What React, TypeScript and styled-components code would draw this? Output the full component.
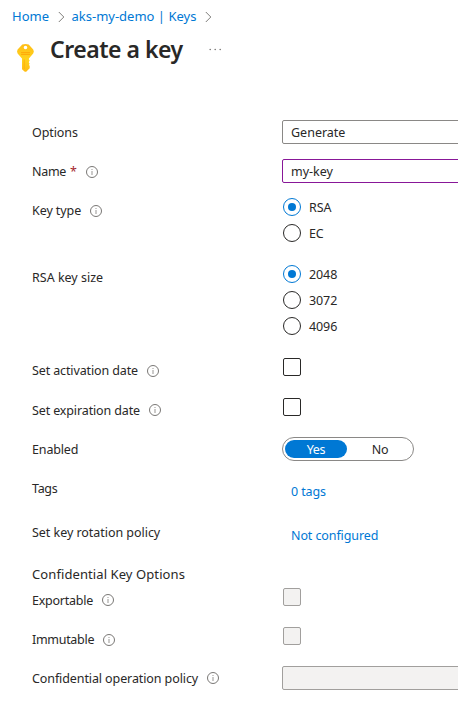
import React from 'react';
import styled, { createGlobalStyle } from 'styled-components';

const GlobalStyle = createGlobalStyle`
  * { box-sizing: border-box; }
  html, body { margin: 0; overflow: hidden; background: #fff; }
  body {
    font: 12.5px/24px 'Noto Sans', 'Open Sans', sans-serif;
    color: #292827;
  }
`;

const Page = styled.main`
  width: 100%;
  height: 709px;
  overflow: hidden;
`;

const Breadcrumb = styled.nav`
  display: flex;
  align-items: center;
  height: 32px;
  padding-left: 12px;
  font-size: 13px;
  white-space: pre;
`;

const Crumb = styled.a<{ $width: number }>`
  width: ${(p) => p.$width}px;
  color: #0078d4;
`;

const Separator = styled.svg<{ $gap: number }>`
  width: 7px;
  height: 12px;
  margin: 2px ${(p) => p.$gap}px 0 8px;
`;

const TitleBar = styled.header`
  display: flex;
  height: 88px;
  padding: 0 0 0 16px;
`;

const KeyGlyph = styled.svg`
  width: 19px;
  height: 30px;
  margin-top: 11px;
`;

const Title = styled.h1`
  width: 134px;
  margin: 1px 0 0 15px;
  font-size: 23px;
  font-weight: 600;
  line-height: 32px;
  letter-spacing: -0.48px;
  white-space: nowrap;
`;

const MoreIcon = styled.svg`
  width: 13px;
  height: 3px;
  margin: 16px 0 0 25px;
`;

const Form = styled.form`
  display: flex;
  flex-direction: column;
`;

const Row = styled.div<{ $height: number }>`
  display: grid;
  grid-template-columns: 250px 1fr;
  height: ${(p) => p.$height}px;
  padding-left: 32px;
`;

const Label = styled.label<{ $spacing?: number }>`
  display: flex;
  align-items: center;
  height: 24px;
  padding-top: 2px;
  letter-spacing: ${(p) => p.$spacing ?? -0.08}px;
  white-space: nowrap;
`;

const Required = styled.span`
  margin-left: 4px;
  color: #a4262c;
`;

const InfoSvg = styled.svg<{ $raised?: boolean }>`
  width: 12px;
  height: 12px;
  margin: 0 0 ${(p) => (p.$raised ? 2 : 0)}px 9px;
`;

const SectionHeading = styled.h2`
  height: 26px;
  margin: 0;
  padding-left: 32px;
  font-size: 13px;
  font-weight: 400;
  line-height: 24px;
  letter-spacing: 0.09px;
`;

const fieldBorder = { normal: '#8a8886', edited: '#881798', disabled: '#a19f9d' };

const Field = styled.div<{ $tone?: keyof typeof fieldBorder }>`
  height: 24px;
  margin-right: -10px;
  padding-left: 8px;
  border: 1px solid ${(p) => fieldBorder[p.$tone ?? 'normal']};
  border-radius: 2px;
  background: ${(p) => (p.$tone === 'disabled' ? '#f3f2f1' : '#fff')};
  line-height: 23px;
`;

const Options = styled.div`
  display: flex;
  flex-direction: column;
  gap: 8px;
`;

const Option = styled.div`
  display: flex;
  align-items: center;
  gap: 8px;
  height: 18px;
  padding-left: 1px;
  letter-spacing: -0.1px;
`;

const Radio = styled.span<{ $checked: boolean }>`
  display: grid;
  place-items: center;
  width: 18px;
  height: 18px;
  border: 1px solid ${(p) => (p.$checked ? '#0078d4' : '#292827')};
  border-radius: 50%;

  &::after {
    content: '';
    width: 8px;
    height: 8px;
    border-radius: 50%;
    background: ${(p) => (p.$checked ? '#0078d4' : 'transparent')};
  }
`;

const OptionText = styled.span`
  padding-top: 1px;
`;

const Checkbox = styled.span<{ $disabled?: boolean }>`
  width: 18px;
  height: 18px;
  margin-left: 1px;
  border: 1px solid ${(p) => (p.$disabled ? '#a19f9d' : '#292827')};
  border-radius: 2px;
  background: ${(p) => (p.$disabled ? '#f3f2f1' : '#fff')};
`;

const Toggle = styled.div`
  display: flex;
  width: 132px;
  height: 24px;
  padding: 2px;
  border: 1px solid #8a8886;
  border-radius: 12px;
`;

const ToggleItem = styled.span<{ $active?: boolean }>`
  flex: none;
  width: ${(p) => (p.$active ? 62 : 66)}px;
  height: 18px;
  border-radius: 9px;
  background: ${(p) => (p.$active ? '#0078d4' : 'transparent')};
  color: ${(p) => (p.$active ? '#fff' : '#292827')};
  line-height: 19px;
  text-align: center;
  letter-spacing: -0.3px;
`;

const Link = styled.a`
  height: 28px;
  padding: 4px 0 0 9px;
  color: #0078d4;
  letter-spacing: -0.1px;
`;

function Info({ raised }: { raised?: boolean }) {
  return (
    <InfoSvg $raised={raised} viewBox="0 0 12 12" fill="none">
      <circle cx="6" cy="6" r="5.5" stroke="#797775" />
      <path d="M6 5v4M6 3v1" stroke="#979593" />
    </InfoSvg>
  );
}

function Chevron({ gap }: { gap: number }) {
  return (
    <Separator $gap={gap} viewBox="0 0 7 12" fill="none">
      <path d="M.8 1l5 5-5 5" stroke="#706e6c" strokeWidth="0.9" />
    </Separator>
  );
}

function KeyIcon() {
  return (
    <KeyGlyph viewBox="0 0 19 30">
      <defs>
        <linearGradient id="gold" x1="0" y1="0" x2="0" y2="1">
          <stop offset="0" stopColor="#ffbd18" />
          <stop offset="0.55" stopColor="#ffd21c" />
          <stop offset="1" stopColor="#ffbc12" />
        </linearGradient>
      </defs>
      <path
        fill="url(#gold)"
        fillRule="evenodd"
        d="M6.3 1.6Q9.5.2 12.7 1.6L17.2 6.6Q18.5 8.5 17.2 10.4L12.9 15.4V16.5L13.7 17.5L12.9 18.7V19.7L13.7 20.7L12.9 21.8L13.7 23V25.2L10.2 28.7H8.8L6 26.2V15.4L1.6 10.4Q.5 8.5 1.6 6.6ZM9.5 2.7A1.8 1.8 0 1 0 9.5 6.3A1.8 1.8 0 1 0 9.5 2.7Z"
      />
      <rect x="5" y="9" width="9" height="1.2" rx=".4" fill="#ffab0a" />
      <rect x="5" y="10.9" width="9" height="1.2" rx=".4" fill="#ffab0a" />
      <path d="M8.2 16.5V26" stroke="#ffb00a" strokeWidth="1" />
    </KeyGlyph>
  );
}

function RadioGroup({ values }: { values: string[] }) {
  return (
    <Options>
      {values.map((value, i) => (
        <Option key={value}>
          <Radio $checked={i === 0} />
          <OptionText>{value}</OptionText>
        </Option>
      ))}
    </Options>
  );
}

export default function App() {
  return (
    <>
      <GlobalStyle />
      <Page>
        <Breadcrumb>
          <Crumb $width={37.5}>Home</Crumb>
          <Chevron gap={7} />
          <Crumb $width={125}>aks-my-demo | Keys</Crumb>
          <Chevron gap={0} />
        </Breadcrumb>
        <TitleBar>
          <KeyIcon />
          <Title>Create a key</Title>
          <MoreIcon viewBox="0 0 13 3" fill="#797775">
            <circle cx="1.2" cy="1.5" r=".8" />
            <circle cx="6.2" cy="1.5" r=".8" />
            <circle cx="11.2" cy="1.5" r=".8" />
          </MoreIcon>
        </TitleBar>
        <Form>
          <Row $height={39}>
            <Label>Options</Label>
            <Field>Generate</Field>
          </Row>
          <Row $height={39}>
            <Label $spacing={-0.3}>
              Name<Required>*</Required>
              <Info />
            </Label>
            <Field $tone="edited">my-key</Field>
          </Row>
          <Row $height={67}>
            <Label>
              Key type
              <Info />
            </Label>
            <RadioGroup values={['RSA', 'EC']} />
          </Row>
          <Row $height={93}>
            <Label $spacing={0}>RSA key size</Label>
            <RadioGroup values={['2048', '3072', '4096']} />
          </Row>
          <Row $height={40}>
            <Label $spacing={-0.12}>
              Set activation date
              <Info />
            </Label>
            <Checkbox />
          </Row>
          <Row $height={39}>
            <Label $spacing={-0.13}>
              Set expiration date
              <Info raised />
            </Label>
            <Checkbox />
          </Row>
          <Row $height={39}>
            <Label $spacing={-0.15}>Enabled</Label>
            <Toggle>
              <ToggleItem $active>Yes</ToggleItem>
              <ToggleItem>No</ToggleItem>
            </Toggle>
          </Row>
          <Row $height={44}>
            <Label $spacing={-0.3}>Tags</Label>
            <Link>0 tags</Link>
          </Row>
          <Row $height={42}>
            <Label $spacing={-0.04}>Set key rotation policy</Label>
            <Link>Not configured</Link>
          </Row>
          <SectionHeading>Confidential Key Options</SectionHeading>
          <Row $height={39}>
            <Label $spacing={-0.24}>
              Exportable
              <Info raised />
            </Label>
            <Checkbox $disabled />
          </Row>
          <Row $height={39}>
            <Label $spacing={-0.3}>
              Immutable
              <Info />
            </Label>
            <Checkbox $disabled />
          </Row>
          <Row $height={39}>
            <Label $spacing={-0.1}>
              Confidential operation policy
              <Info raised />
            </Label>
            <Field $tone="disabled" />
          </Row>
        </Form>
      </Page>
    </>
  );
}
